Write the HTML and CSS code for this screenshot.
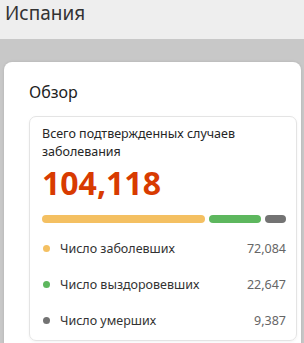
FILE: index.html
```
<!DOCTYPE html>
<html lang="ru">
<head>
  <meta charset="UTF-8" />
  <meta name="viewport" content="width=device-width, initial-scale=1" />
  <title>Испания</title>
  <link rel="stylesheet" href="styles.css">
</head>
<body>

<header>
  <h1>Испания</h1>
</header>

<main>
  <section class="card">
    <h2>Обзор</h2>

    <div class="stats">
      <p class="stats-label">Всего подтвержденных случаев заболевания</p>
      <div class="total">104,118</div>

      <div class="bar">
        <span class="seg active" style="flex-grow:72084"></span>
        <span class="seg recovered" style="flex-grow:22647"></span>
        <span class="seg deaths" style="flex-grow:9387"></span>
      </div>

      <ul class="legend">
        <li><span class="dot active"></span><span class="name">Число заболевших</span><span class="num">72,084</span></li>
        <li><span class="dot recovered"></span><span class="name">Число выздоровевших</span><span class="num">22,647</span></li>
        <li><span class="dot deaths"></span><span class="name">Число умерших</span><span class="num">9,387</span></li>
      </ul>
    </div>
  </section>
</main>

</body>
</html>
```

FILE: styles.css
```
body {
  font-family: "Noto Sans", "Open Sans", sans-serif;
  margin:0; background:#c8c8c8; color:#262626;
  overflow:hidden;
}
header {
  background:#eeeeee; height:39px; padding:0 5px;
}
header h1 {
  margin:0; font-weight:400; font-size:19px; line-height:26px; color:#333;
}
main {
  padding:23px 3px 0 4px;
}
.card {
  background:#fff;
  border-radius:8px;
  padding:18px 4px 20px 25px;
  box-shadow:0 0 3px rgba(0,0,0,0.12);
}
.card h2 {
  margin:0 0 12px; font-size:16px; font-weight:400; line-height:24px; color:#222;
}
.stats {
  border:1px solid #e4e4e4;
  border-radius:7px;
  padding:8px 10px 2px 12px;
  box-shadow:0 1px 3px rgba(0,0,0,0.05);
}
.stats-label {
  margin:0; font-size:12.5px; line-height:18px; color:#262626;
}
.total {
  font-size:32px; font-weight:700; color:#d83b01; line-height:40px; margin-top:2px;
}
.bar {
  display:flex; gap:4px; margin-top:12px; height:8px;
}
.seg {
  border-radius:4px; flex-basis:0;
}
.active { background:#f4c062; }
.recovered { background:#5db75e; }
.deaths { background:#737373; }
.legend {
  list-style:none; margin:7px 0 0; padding:0;
}
.legend li {
  display:flex; align-items:center; height:36px; font-size:12.5px; color:#333;
}
.dot {
  width:7px; height:7px; border-radius:50%; margin:0 10px 0 1px;
}
.name {
  flex:1;
}
.num {
  color:#666;
}
```
